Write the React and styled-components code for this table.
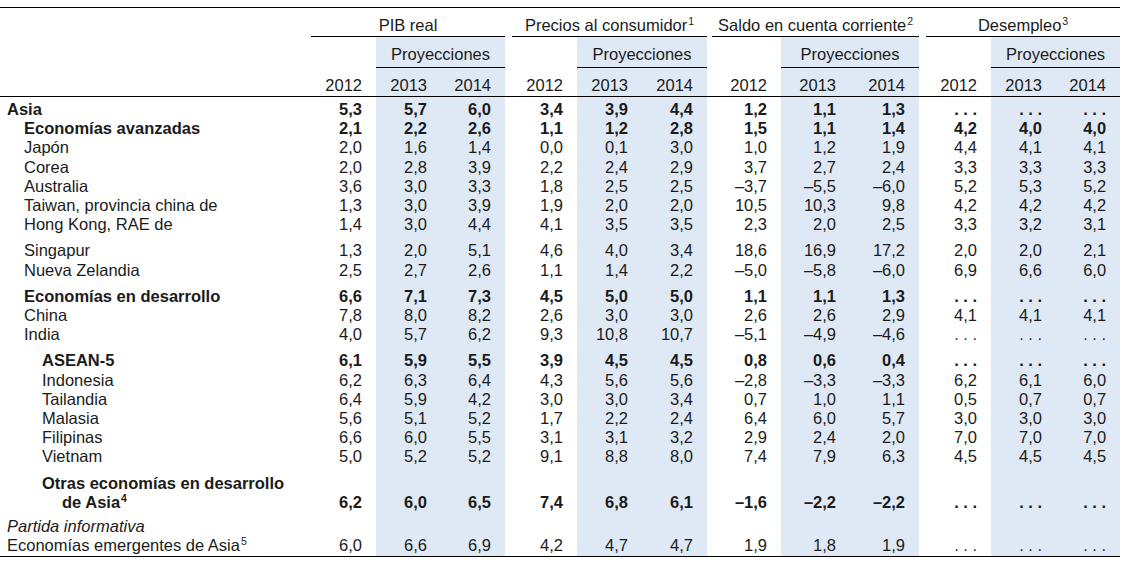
import React from 'react';
import styled, { createGlobalStyle } from 'styled-components';

const SHADE = '#dfe9f5';
const INK = '#1b1b1b';

const GlobalStyle = createGlobalStyle`
  body {
    margin: 0;
    background: #fff;
  }
`;

const Page = styled.div`
  padding-top: 7px;
  font-family: "Liberation Sans Narrow", "Arial Narrow", "Liberation Sans", Arial, sans-serif;
  font-size: 16.5px;
  color: ${INK};
`;

const Table = styled.table`
  width: 1120px;
  table-layout: fixed;
  border-collapse: collapse;
  border-spacing: 0;
  border-top: 1px solid #000;
  border-bottom: 1px solid #000;
`;

const Col = styled.col`
  width: ${p => p.$w}px;
`;

const HeadRow = styled.tr`
  & > th {
    padding-top: ${p => p.$pt}px;
    padding-bottom: ${p => p.$pb}px;
  }
`;

const Blank = styled.th`
  background: ${p => (p.$shade ? SHADE : 'transparent')};
  border-bottom: ${p => (p.$rule ? '1px solid #000' : 'none')};
`;

const GroupTitle = styled.th`
  font-weight: normal;
  line-height: 19px;
  text-align: center;
  vertical-align: bottom;
  white-space: nowrap;
  border-bottom: 1px solid #000;
`;

const ProjTitle = styled.th`
  font-weight: normal;
  line-height: 19px;
  text-align: center;
  vertical-align: bottom;
  background: ${SHADE};
  border-bottom: 1px solid #000;
`;

const YearCell = styled.th`
  font-weight: normal;
  line-height: 19px;
  text-align: right;
  vertical-align: bottom;
  padding-right: 14px;
  background: ${p => (p.$shade ? SHADE : 'transparent')};
  border-bottom: 1px solid #000;
`;

const Sup = styled.sup`
  font-size: 10.5px;
  line-height: 0;
  vertical-align: 6px;
  margin-left: 1px;
`;

const Row = styled.tr`
  & > td {
    padding-top: ${p => p.$top || 0}px;
    padding-bottom: ${p => p.$bottom || 0}px;
  }
`;

const Label = styled.td`
  padding-left: ${p => p.$indent}px;
  text-indent: ${p => (p.$hang ? `-${p.$hang}px` : '0')};
  font-weight: ${p => (p.$bold ? 700 : 400)};
  font-style: ${p => (p.$italic ? 'italic' : 'normal')};
  line-height: 19.2px;
  white-space: nowrap;
  vertical-align: bottom;
`;

const Num = styled.td`
  text-align: right;
  padding-right: 14px;
  line-height: 19.2px;
  vertical-align: bottom;
  white-space: nowrap;
  font-weight: ${p => (p.$bold ? 700 : 400)};
  background: ${p => (p.$shade ? SHADE : 'transparent')};
`;

const Gap = styled.td``;

const Dots = styled.span`
  letter-spacing: 0;
  color: ${p => (p.$bold ? INK : '#333')};
`;

const groups = [
  { title: 'PIB real', sup: null, w: [65, 65, 64] },
  { title: 'Precios al consumidor', sup: '1', w: [65, 65, 65] },
  { title: 'Saldo en cuenta corriente', sup: '2', w: [69, 69, 69] },
  { title: 'Desempleo', sup: '3', w: [65, 65, 64] },
];
const spacers = [7, 5, 7];

const D = '...';

const rows = [
  { label: 'Asia', indent: 7, bold: true, top: 3, v: ['5,3', '5,7', '6,0', '3,4', '3,9', '4,4', '1,2', '1,1', '1,3', D, D, D] },
  { label: 'Economías avanzadas', indent: 24, bold: true, v: ['2,1', '2,2', '2,6', '1,1', '1,2', '2,8', '1,5', '1,1', '1,4', '4,2', '4,0', '4,0'] },
  { label: 'Japón', indent: 24, v: ['2,0', '1,6', '1,4', '0,0', '0,1', '3,0', '1,0', '1,2', '1,9', '4,4', '4,1', '4,1'] },
  { label: 'Corea', indent: 24, v: ['2,0', '2,8', '3,9', '2,2', '2,4', '2,9', '3,7', '2,7', '2,4', '3,3', '3,3', '3,3'] },
  { label: 'Australia', indent: 24, v: ['3,6', '3,0', '3,3', '1,8', '2,5', '2,5', '–3,7', '–5,5', '–6,0', '5,2', '5,3', '5,2'] },
  { label: 'Taiwan, provincia china de', indent: 24, v: ['1,3', '3,0', '3,9', '1,9', '2,0', '2,0', '10,5', '10,3', '9,8', '4,2', '4,2', '4,2'] },
  { label: 'Hong Kong, RAE de', indent: 24, v: ['1,4', '3,0', '4,4', '4,1', '3,5', '3,5', '2,3', '2,0', '2,5', '3,3', '3,2', '3,1'] },
  { label: 'Singapur', indent: 24, top: 7, v: ['1,3', '2,0', '5,1', '4,6', '4,0', '3,4', '18,6', '16,9', '17,2', '2,0', '2,0', '2,1'] },
  { label: 'Nueva Zelandia', indent: 24, v: ['2,5', '2,7', '2,6', '1,1', '1,4', '2,2', '–5,0', '–5,8', '–6,0', '6,9', '6,6', '6,0'] },
  { label: 'Economías en desarrollo', indent: 24, bold: true, top: 7, v: ['6,6', '7,1', '7,3', '4,5', '5,0', '5,0', '1,1', '1,1', '1,3', D, D, D] },
  { label: 'China', indent: 24, v: ['7,8', '8,0', '8,2', '2,6', '3,0', '3,0', '2,6', '2,6', '2,9', '4,1', '4,1', '4,1'] },
  { label: 'India', indent: 24, v: ['4,0', '5,7', '6,2', '9,3', '10,8', '10,7', '–5,1', '–4,9', '–4,6', D, D, D] },
  { label: 'ASEAN-5', indent: 42, bold: true, top: 7, v: ['6,1', '5,9', '5,5', '3,9', '4,5', '4,5', '0,8', '0,6', '0,4', D, D, D] },
  { label: 'Indonesia', indent: 42, v: ['6,2', '6,3', '6,4', '4,3', '5,6', '5,6', '–2,8', '–3,3', '–3,3', '6,2', '6,1', '6,0'] },
  { label: 'Tailandia', indent: 42, v: ['6,4', '5,9', '4,2', '3,0', '3,0', '3,4', '0,7', '1,0', '1,1', '0,5', '0,7', '0,7'] },
  { label: 'Malasia', indent: 42, v: ['5,6', '5,1', '5,2', '1,7', '2,2', '2,4', '6,4', '6,0', '5,7', '3,0', '3,0', '3,0'] },
  { label: 'Filipinas', indent: 42, v: ['6,6', '6,0', '5,5', '3,1', '3,1', '3,2', '2,9', '2,4', '2,0', '7,0', '7,0', '7,0'] },
  { label: 'Vietnam', indent: 42, v: ['5,0', '5,2', '5,2', '9,1', '8,8', '8,0', '7,4', '7,9', '6,3', '4,5', '4,5', '4,5'] },
  {
    label: (
      <>
        Otras economías en desarrollo
        <br />
        de Asia<Sup>4</Sup>
      </>
    ),
    indent: 62, hang: 20, bold: true, top: 7,
    v: ['6,2', '6,0', '6,5', '7,4', '6,8', '6,1', '–1,6', '–2,2', '–2,2', D, D, D],
  },
  { label: 'Partida informativa', indent: 7, italic: true, top: 5, v: null },
  {
    label: (
      <>
        Economías emergentes de Asia<Sup>5</Sup>
      </>
    ),
    indent: 7, bottom: 1,
    v: ['6,0', '6,6', '6,9', '4,2', '4,7', '4,7', '1,9', '1,8', '1,9', D, D, D],
  },
];

function cellValue(val, bold) {
  if (val === D) return <Dots $bold={bold}>. . .</Dots>;
  return val;
}

function DataRow({ row }) {
  const cells = [];
  groups.forEach((g, gi) => {
    [0, 1, 2].forEach(k => {
      const idx = gi * 3 + k;
      const val = row.v ? row.v[idx] : '';
      cells.push(
        <Num key={`n${idx}`} $shade={k > 0} $bold={row.bold}>
          {cellValue(val, row.bold)}
        </Num>
      );
    });
    if (gi < spacers.length) cells.push(<Gap key={`s${gi}`} />);
  });
  return (
    <Row $top={row.top} $bottom={row.bottom}>
      <Label $indent={row.indent} $hang={row.hang} $bold={row.bold} $italic={row.italic}>
        {row.label}
      </Label>
      {cells}
    </Row>
  );
}

export default function App() {
  return (
    <Page>
      <GlobalStyle />
      <Table>
        <colgroup>
          <Col $w={311} />
          {groups.map((g, gi) => (
            <React.Fragment key={gi}>
              {g.w.map((w, k) => (
                <Col key={k} $w={w} />
              ))}
              {gi < spacers.length && <Col $w={spacers[gi]} />}
            </React.Fragment>
          ))}
        </colgroup>
        <thead>
          <HeadRow $pt={8} $pb={1}>
            <Blank />
            {groups.map((g, gi) => (
              <React.Fragment key={gi}>
                <GroupTitle colSpan={3}>
                  {g.title}
                  {g.sup && <Sup>{g.sup}</Sup>}
                </GroupTitle>
                {gi < spacers.length && <Blank />}
              </React.Fragment>
            ))}
          </HeadRow>
          <HeadRow $pt={8} $pb={3}>
            <Blank />
            {groups.map((g, gi) => (
              <React.Fragment key={gi}>
                <Blank />
                <ProjTitle colSpan={2}>Proyecciones</ProjTitle>
                {gi < spacers.length && <Blank />}
              </React.Fragment>
            ))}
          </HeadRow>
          <HeadRow $pt={8} $pb={1}>
            <Blank $rule />
            {groups.map((g, gi) => (
              <React.Fragment key={gi}>
                <YearCell>2012</YearCell>
                <YearCell $shade>2013</YearCell>
                <YearCell $shade>2014</YearCell>
                {gi < spacers.length && <Blank $rule />}
              </React.Fragment>
            ))}
          </HeadRow>
        </thead>
        <tbody>
          {rows.map((row, i) => (
            <DataRow key={i} row={row} />
          ))}
        </tbody>
      </Table>
    </Page>
  );
}
